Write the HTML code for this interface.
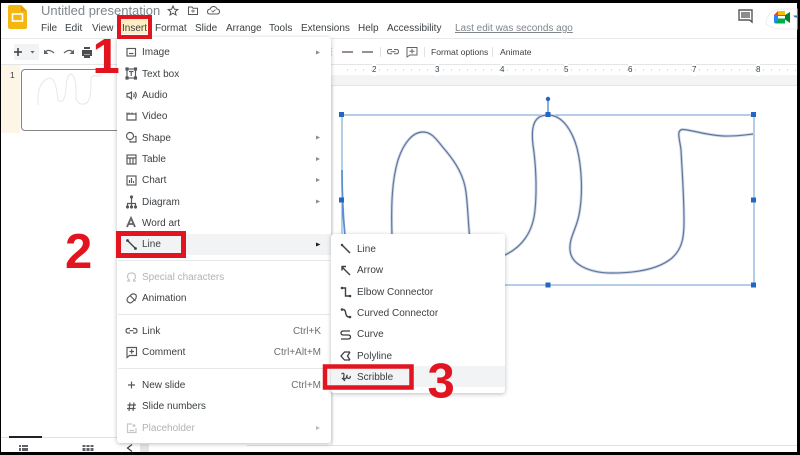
<!DOCTYPE html>
<html><head><meta charset="utf-8"><style>
html,body{margin:0;padding:0;background:#000}
#p{position:relative;width:800px;height:455px;overflow:hidden;background:#000;font-family:"Liberation Sans",sans-serif;color:#3c4043}
#c{position:absolute;left:1px;top:3px;width:796px;height:449px;background:#fff}
#b{position:absolute;left:0;top:0;width:800px;height:455px;filter:blur(.35px)}
.t{position:absolute;white-space:nowrap;font-size:10px;line-height:12px;margin-top:1px}
.a{position:absolute;background:#fff}
.menu{position:absolute;background:#fff;border-radius:3px;box-shadow:0 1px 4px rgba(60,64,67,.35)}
.g{color:#b0b3b6}
.r{text-align:right}
</style></head><body><div id="p"><div id="c"></div><div id="b">
<!-- chrome backgrounds -->
<div class="a" style="left:1px;top:38px;width:796px;height:1px;background:#e6e8ea"></div>
<div class="a" style="left:1px;top:64px;width:796px;height:1px;background:#e3e5e7"></div>
<div class="a" style="left:330px;top:65px;width:467px;height:10px;background:#fff"></div>
<div class="a" style="left:330px;top:75px;width:467px;height:10px;background:#f3f4f5;border-bottom:1px solid #e3e5e7"></div>
<div class="a" style="left:1px;top:65px;width:19px;height:68px;background:#fdf6e6"></div>
<div class="a" style="left:331px;top:86px;width:2px;height:360px;background:#eeeff0"></div>
<div class="a" style="left:21px;top:69px;width:100px;height:60px;border:1px solid #85857f;border-radius:4px;background:#fff"></div>
<div class="a" style="left:14px;top:44px;width:25px;height:16px;background:#f1f3f4;border-radius:2px"></div>
<div class="a" style="left:1px;top:437px;width:116px;height:1px;background:#dfe1e3"></div>
<div class="a" style="left:9px;top:436px;width:33px;height:2px;background:#202124"></div>
<div class="a" style="left:140px;top:444px;width:9px;height:8px;background:#e4e5e6"></div>
<div class="a" style="left:247px;top:445px;width:550px;height:1px;background:#dfe1e3"></div>

<!-- Header text -->
<div class="t" style="left:41px;top:2px;font-size:13px;line-height:15px;color:#80868b">Untitled presentation</div>
<div class="t" style="left:41px;top:22px">File</div>
<div class="t" style="left:65px;top:22px">Edit</div>
<div class="t" style="left:92px;top:22px">View</div>
<div class="a" style="left:121px;top:19px;width:26px;height:15px;background:#fdeec4"></div>
<div class="t" style="left:122px;top:22px">Insert</div>
<div class="t" style="left:155px;top:22px">Format</div>
<div class="t" style="left:195px;top:22px">Slide</div>
<div class="t" style="left:226px;top:22px">Arrange</div>
<div class="t" style="left:269px;top:22px">Tools</div>
<div class="t" style="left:301px;top:22px">Extensions</div>
<div class="t" style="left:358px;top:22px">Help</div>
<div class="t" style="left:387px;top:22px">Accessibility</div>
<div class="t" style="left:455px;top:22px;color:#80868b;text-decoration:underline">Last edit was seconds ago</div>
<div class="t" style="left:431px;top:45px;font-size:8.6px">Format options</div>
<div class="t" style="left:500px;top:45px;font-size:8.6px">Animate</div>
<div class="t" style="left:10px;top:68px;font-size:8.5px">1</div>
<div class="a" style="left:340px;top:65px;width:457px;height:10px;background:repeating-linear-gradient(90deg,transparent 0 7px,#dfe1e3 7px 8px);background-size:auto 2px;background-position:0 4px;background-repeat:repeat-x"></div>
<div class="t" style="left:372px;top:63px;font-size:8px;background:#fff">2</div>
<div class="t" style="left:435px;top:63px;font-size:8px;background:#fff">3</div>
<div class="t" style="left:500px;top:63px;font-size:8px;background:#fff">4</div>
<div class="t" style="left:564px;top:63px;font-size:8px;background:#fff">5</div>
<div class="t" style="left:628px;top:63px;font-size:8px;background:#fff">6</div>
<div class="t" style="left:692px;top:63px;font-size:8px;background:#fff">7</div>
<div class="t" style="left:756px;top:63px;font-size:8px;background:#fff">8</div>

<!-- Canvas & header icons -->
<svg style="position:absolute;left:0;top:0" width="800" height="455" viewBox="0 0 800 455" fill="none">
<path d="M8 7Q8 5 10 5H21L27 11V27Q27 29 25 29H10Q8 29 8 27Z" fill="#f4b711"/>
<path d="M21 5L27 11H21Z" fill="#e0a20a"/>
<rect x="12.500" y="14" width="10" height="7" stroke="#fff" stroke-width="1.600"/>
<path d="M173 6L174.400 9.200 177.800 9.500 175.200 11.700 176 15 173 13.200 170 15 170.800 11.700 168.200 9.500 171.600 9.200Z" stroke="#4a4d50"/>
<path d="M188.500 7H192L193 8.300H197.500V14.500H188.500Z" stroke="#55585b"/><path d="M191 11H195M193 9.500V12.800" stroke="#55585b" stroke-width=".8"/>
<path d="M210 14H217Q219.500 14 219.500 11.500 219.500 9.300 217 9 216 6.500 213.500 6.500 211 6.500 210.300 9 207.500 9.300 207.500 11.700 207.500 14 210 14Z" stroke="#55585b"/><path d="M211.500 10.500L213 12 215.500 9.500" stroke="#55585b" stroke-width=".8"/>
<path d="M739 10H752V22L749.500 20H739Z" stroke="#55585b" stroke-width="1.400"/><rect x="741" y="12" width="9" height="6" fill="#8b8d8f"/>
<path d="M766 24Q767 9 782 9H797V29H782Q772 29 766 24Z" stroke="#eceef0" fill="#fff"/>
<path d="M774 15L778 11H785V16H778V21H774Z" fill="#ea4335"/><path d="M774 15H778V21H774Z" fill="#2684fc"/><path d="M774 21H778V23H785V23.500H776Q774 23.500 774 22Z" fill="#2684fc"/>
<path d="M778 11H785V15H778Z" fill="#fbbc04"/><path d="M778 18.500H785V23.500H776V21H778Z" fill="#00ac47"/><path d="M785 15V19.500L790 23V12Z" fill="#00832d"/>
<path d="M793 15.500H797V17.500H795Z" fill="#3f6fb0"/>

<!-- Toolbar -->
<path d="M14 52H22M18 48V56" stroke="#3c4043" stroke-width="1.500"/><path d="M30.500 51L32.500 53.500 34.500 51Z" fill="#5f6368"/>
<path d="M45 52.500Q48 48 54 53" stroke="#5f6368" stroke-width="1.300"/><path d="M44 49.500V54H48.500Z" fill="#5f6368"/>
<path d="M73 52.500Q70 48 64 53" stroke="#5f6368" stroke-width="1.300"/><path d="M74 49.500V54H69.500Z" fill="#5f6368"/>
<path d="M82 50H92V56H90V54.500H84V56H82ZM84 47H90V49H84ZM84 55H90V58H84Z" fill="#4b4e51"/>
<path d="M331 48V49.500M331 51V52.500M331 54V55.500" stroke="#9a9ca0"/>
<path d="M342 52H353M362 52H373" stroke="#5f4b4a" stroke-width="1.200"/>
<path d="M380.500 47V57M424.500 47V57M492.500 47V57" stroke="#e0e2e4"/>
<path d="M392 49.500H389.500Q387.500 49.500 387.500 51.500 387.500 53.800 389.500 53.800H392M394 49.500H396.500Q398.500 49.500 398.500 51.500 398.500 53.800 396.500 53.800H394M390.500 51.700H395.500" stroke="#5f6368"/>
<path d="M407 47.500H417V55H410L407 57Z" stroke="#5f6368"/><path d="M409.500 51.200H414.500M412 48.800V53.500" stroke="#5f6368"/>

<!-- Thumbnail -->
<path d="M38 105C37 92 40 80 50 78 55 78 57 90 58 100 61 104 65 100 66 90 66 82 67 75 71 74 75 75 76 85 76 92 75 100 78 105 84 104 90 103 91 95 91 80 91 76 93 75 97 76L102 76" stroke="#e6e7e5" stroke-width="1"/>

<!-- Selection and scribble -->
<path d="M342 115H754V285H342Z" stroke="#6d9bd1" stroke-width="1"/>
<path d="M548 100V115" stroke="#3f78c7" stroke-width="1.200"/>
<circle cx="548" cy="99" r="2.200" fill="#2367c3"/>
<path d="M342 170C342 190 343 215 345 236" stroke="#5a8fd0" stroke-width="1.800"/>
<path d="M392 236C391 205 392 180 398 160 404 142 413 132 423 132 433 132 438 142 446 151 456 163 464 176 466 192 468 208 468 222 470 240 475 262 490 262 505 255 522 247 533 232 535 210 537 190 536 165 533 145 531 128 533 115 548 115 562 115 572 130 577 148 582 168 583 195 579 215 576 230 569 238 570 250 571 265 590 273 612 273 640 273 660 268 672 258 682 249 684 238 684 222 684 195 682 170 681 150 680 140 676 131 682 129.500 688 129 705 135 723 136 735 136.500 745 135 753 134" stroke="#d3dbea" stroke-width="3"/>
<path d="M392 236C391 205 392 180 398 160 404 142 413 132 423 132 433 132 438 142 446 151 456 163 464 176 466 192 468 208 468 222 470 240 475 262 490 262 505 255 522 247 533 232 535 210 537 190 536 165 533 145 531 128 533 115 548 115 562 115 572 130 577 148 582 168 583 195 579 215 576 230 569 238 570 250 571 265 590 273 612 273 640 273 660 268 672 258 682 249 684 238 684 222 684 195 682 170 681 150 680 140 676 131 682 129.500 688 129 705 135 723 136 735 136.500 745 135 753 134" stroke="#62759c" stroke-width="1.200"/>
<g fill="#2367c3"><rect x="339" y="112" width="5" height="5"/><rect x="545.500" y="112" width="5" height="5"/><rect x="751" y="112" width="5" height="5"/><rect x="339" y="197.500" width="5" height="5"/><rect x="751" y="197.500" width="5" height="5"/><rect x="545.500" y="282.500" width="5" height="5"/><rect x="751" y="282.500" width="5" height="5"/></g>

<!-- bottom icons -->
<path d="M19 445H21V447H19ZM19 448H21V451H19ZM22 445H28V447H22ZM22 448H28V451H22Z" fill="#5f6368"/>
<path d="M84 445H87V447H84ZM88 445H91V447H88ZM92 445H95V447H92ZM84 448H87V451H84ZM88 448H91V451H88ZM92 448H95V451H92Z" fill="#5f6368" transform="translate(-1.500)"/>
<path d="M132 444.500L127.500 448 132 451.500" stroke="#3c4043" stroke-width="1.200"/>
</svg>

<!-- Main menu -->
<div class="menu" style="left:117px;top:37px;width:214px;height:406px"></div>
<div class="a" style="left:117px;top:234px;width:214px;height:21px;background:#f1f3f4"></div>
<div class="a" style="left:118px;top:260px;width:212px;height:1px;background:#e5e7e9"></div>
<div class="a" style="left:118px;top:314px;width:212px;height:1px;background:#e5e7e9"></div>
<div class="a" style="left:118px;top:368px;width:212px;height:1px;background:#e5e7e9"></div>
<div class="t" style="left:142px;top:46px">Image</div>
<div class="t" style="left:142px;top:68px">Text box</div>
<div class="t" style="left:142px;top:89px">Audio</div>
<div class="t" style="left:142px;top:110px">Video</div>
<div class="t" style="left:142px;top:132px">Shape</div>
<div class="t" style="left:142px;top:153px">Table</div>
<div class="t" style="left:142px;top:174px">Chart</div>
<div class="t" style="left:142px;top:196px">Diagram</div>
<div class="t" style="left:142px;top:217px">Word art</div>
<div class="t" style="left:142px;top:238px">Line</div>
<div class="t g" style="left:142px;top:271px">Special characters</div>
<div class="t" style="left:142px;top:292px">Animation</div>
<div class="t" style="left:142px;top:325px">Link</div>
<div class="t" style="left:142px;top:346px">Comment</div>
<div class="t" style="left:142px;top:379px">New slide</div>
<div class="t" style="left:142px;top:400px">Slide numbers</div>
<div class="t g" style="left:142px;top:422px">Placeholder</div>
<div class="t r" style="right:479px;top:325px;color:#6b6f73">Ctrl+K</div>
<div class="t r" style="right:479px;top:346px;color:#6b6f73">Ctrl+Alt+M</div>
<div class="t r" style="right:479px;top:379px;color:#6b6f73">Ctrl+M</div>

<!-- Submenu -->
<div class="menu" style="left:331px;top:234px;width:174px;height:159px"></div>
<div class="a" style="left:331px;top:366px;width:174px;height:21px;background:#f1f3f4"></div>
<div class="t" style="left:357px;top:243px">Line</div>
<div class="t" style="left:357px;top:264px">Arrow</div>
<div class="t" style="left:357px;top:286px">Elbow Connector</div>
<div class="t" style="left:357px;top:307px">Curved Connector</div>
<div class="t" style="left:357px;top:328px">Curve</div>
<div class="t" style="left:357px;top:350px">Polyline</div>
<div class="t" style="left:357px;top:371px">Scribble</div>

<!-- Menu icons & annotations -->
<svg style="position:absolute;left:0;top:0" width="800" height="455" viewBox="0 0 800 455" fill="none">
<g stroke="#54575b" stroke-width="1.150">
<rect x="127" y="48.500" width="8.500" height="7.500"/><path d="M129 53.500H133.500"/>
<rect x="127" y="69" width="8.500" height="9"/><path d="M129 71.500H133.500M131.200 71.500V76"/><path d="M126 68H128V70H126ZM134.500 68H136.500V70H134.500ZM126 77H128V79H126ZM134.500 77H136.500V79H134.500Z"/>
<path d="M127 93.500V97H129L131.500 99V92L129 93.500ZM133.500 93.500Q135 95.200 133.500 97M135 92Q137.500 95.200 135 98.500"/>
<path d="M127 114V120H136V114ZM127 112.500V114H136V112.500M129 112.500V114M132 112.500V114"/>
<circle cx="130" cy="136" r="3.500"/><path d="M134.500 136.500H136V142H130V140.500"/>
<rect x="127" y="155" width="9" height="9"/><path d="M127 158H136M130 158V164M133 158V164"/>
<rect x="127" y="176" width="9" height="9"/><path d="M129.500 183V180M131.500 183V178M133.500 183V181"/>
<path d="M131.500 197V203M127.500 207V203.500H135.500V207M131.500 203.500V207"/><circle cx="131.500" cy="197" r="1" fill="#5f6368"/><circle cx="127.500" cy="207" r="1" fill="#5f6368"/><circle cx="131.500" cy="207" r="1" fill="#5f6368"/><circle cx="135.500" cy="207" r="1" fill="#5f6368"/>
</g>
<path d="M127 227L131 218 135 227M128.500 224H133.500" stroke="#5f6368" stroke-width="1.800"/>
<path d="M127.500 240.500L135.500 248.500" stroke="#3c4043" stroke-width="1.300"/><circle cx="127.500" cy="240.500" r="1.400" fill="#3c4043"/><circle cx="135.500" cy="248.500" r="1.400" fill="#3c4043"/>
<path d="M127 281H129.500V280Q127.500 278.500 127.500 276.500 127.500 273 131.500 273 135.500 273 135.500 276.500 135.500 278.500 133.500 280V281H136" stroke="#c4c6c8" stroke-width="1.200"/>
<path d="M128 302Q126 300 128 297.500L131.500 294.500Q134 293 136 295 137 297.500 135 299.500L131.500 302.500Q130 303.500 128 302ZM130 295.500L135.500 301" stroke="#54575b" stroke-width="1.150"/>
<path d="M130 328.500H128.500Q126 328.500 126 330.700 126 333 128.500 333H130M133 328.500H134.500Q137 328.500 137 330.700 137 333 134.500 333H133M129.500 330.700H133.500" stroke="#54575b" stroke-width="1.150"/>
<path d="M127 347.500H136.500V355.500H129.500L127 357.500Z" stroke="#54575b" stroke-width="1.150"/><path d="M129.500 351.500H134M131.700 349.300V353.700" stroke="#54575b" stroke-width="1.150"/>
<path d="M128 385H135M131.500 381.500V388.500" stroke="#54575b" stroke-width="1.150"/>
<path d="M130 402.500L129 411M134 402.500L133 411M127.500 405H136M127 408.500H135.500" stroke="#54575b" stroke-width="1.150"/>
<path d="M132 424H127.500V432.500H136V428M134 424V427M132.500 425.500H135.500M129.500 430.500H134" stroke="#c4c6c8" stroke-width="1.200"/>
<g fill="#8a8d90"><path d="M316 50.500L320 52.500 316 54.500Z"/><path d="M316 135.500L320 137.500 316 139.500Z"/><path d="M316 157L320 159 316 161Z"/><path d="M316 178L320 180 316 182Z"/><path d="M316 199.500L320 201.500 316 203.500Z"/></g>
<path d="M316 242.500L320.500 244.500 316 246.500Z" fill="#202124"/>
<path d="M316 426L320 428 316 430Z" fill="#b8babc"/>

<!-- Submenu icons -->
<path d="M342 245L350 253" stroke="#3c4043" stroke-width="1.500"/><circle cx="342" cy="245" r="1.200" fill="#3c4043"/>
<path d="M342 267L350 275M342 266.500V270.500M341.500 266.500H346" stroke="#3c4043" stroke-width="1.400"/>
<path d="M342 288H345.500V296H350" stroke="#3c4043" stroke-width="1.400"/><circle cx="342" cy="288" r="1.300" fill="#3c4043"/><circle cx="350" cy="296" r="1.300" fill="#3c4043"/>
<path d="M342 309.500H343Q345 309.500 345.500 312 346 317 349 317H350" stroke="#3c4043" stroke-width="1.400"/><circle cx="342" cy="309.500" r="1.300" fill="#3c4043"/><circle cx="350" cy="317" r="1.300" fill="#3c4043"/>
<path d="M350 331H343.500Q341 331 341 333 341 335 343.500 335H348Q350.500 335 350.500 337 350.500 339 348 339H341" stroke="#3c4043" stroke-width="1.300"/>
<path d="M350 352H344.500L341 356 344.500 360H350M350 352L347.500 356 350 360" stroke="#3c4043" stroke-width="1.300"/>
<path d="M341.500 374Q344 372 344 375 343 379 345 379 347.500 377 347 375.500 345.500 378 349 378.500 351 377.500 350 376M342 378L345 381" stroke="#3c4043" stroke-width="1.200"/>

<!-- Red annotations -->
<g stroke="#e2141f">
<rect x="119" y="17" width="31" height="20" stroke-width="4"/>
<rect x="118.500" y="233.500" width="65" height="22" stroke-width="5"/>
<rect x="325" y="366.500" width="86.500" height="21" stroke-width="4.500"/>
</g>
<g fill="#e2141f" font-family="Liberation Sans, sans-serif" font-weight="700" font-size="49">
<text x="92.500" y="73">1</text>
<text x="65" y="268">2</text>
<text x="427.500" y="397.500">3</text>
</g>
</svg>
</div></div></body></html>
